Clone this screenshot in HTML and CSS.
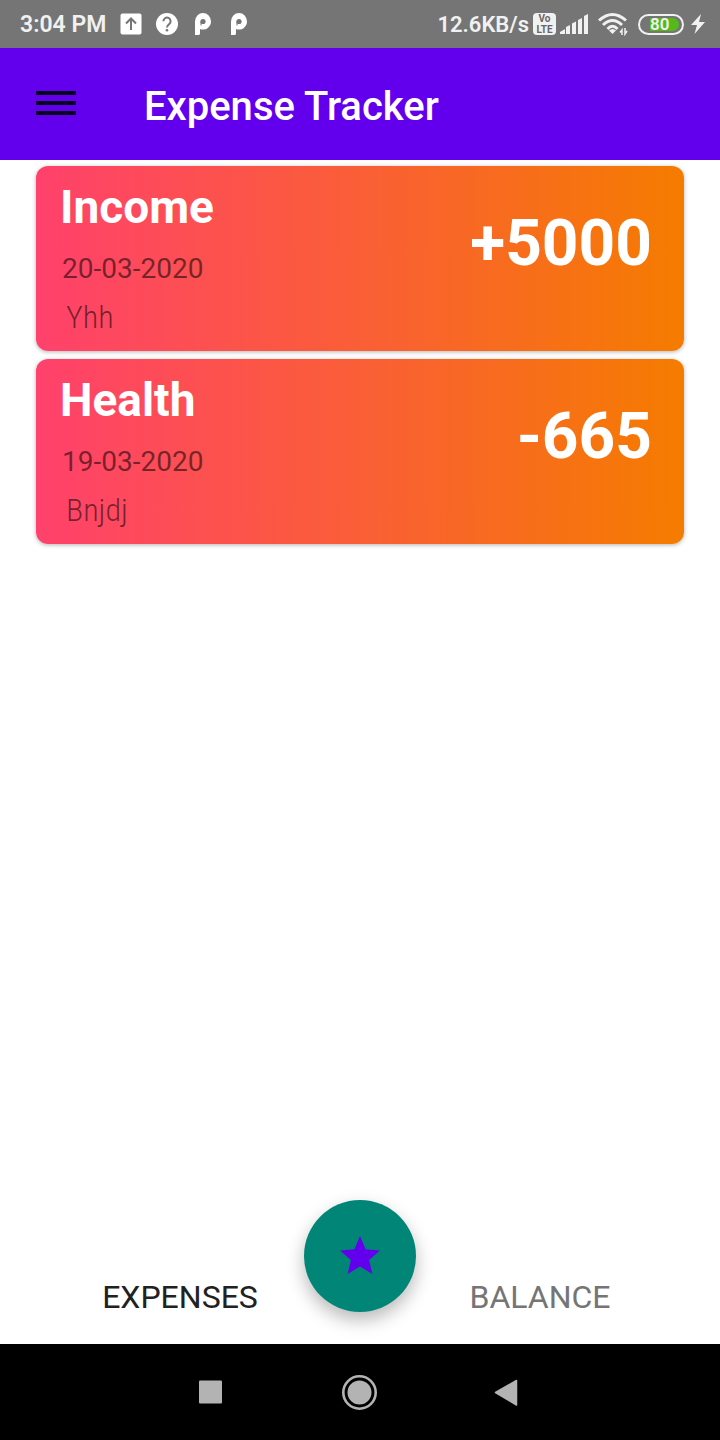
FILE: index.html
```html
<!DOCTYPE html>
<html lang="en">
<head>
<meta charset="utf-8">
<meta name="viewport" content="width=device-width, initial-scale=1">
<title>Expense Tracker</title>
<link rel="stylesheet" href="styles.css">
</head>
<body>
<div class="status-bar">
  <div class="status-left">
    <span>3:04 PM</span>
    <svg width="22" height="22" viewBox="0 0 22 22" aria-hidden="true"><rect x="0.5" y="0.5" width="21" height="21" rx="2" fill="#fff"/><path d="M11 17V6M6 10.5l5-5 5 5" fill="none" stroke="#757575" stroke-width="2"/></svg>
    <svg width="22" height="22" viewBox="0 0 22 22" aria-hidden="true"><circle cx="11" cy="11" r="11" fill="#fff"/><path d="M7.4 8.3a3.6 3.6 0 1 1 5.9 2.7c-1.500 1.200-2.300 1.700-2.300 3.500" fill="none" stroke="#757575" stroke-width="2"/><circle cx="11" cy="17.300" r="1.300" fill="#757575"/></svg>
    <svg width="22" height="22" viewBox="0 0 22 22" aria-hidden="true"><path d="M3 22V8.500A8 8.500 0 0 1 19 8.500A8 8 0 0 1 8 16V20.500Q8 22 6.500 22Z" fill="#fff"/><circle cx="11" cy="8.500" r="2.600" fill="#757575"/><path d="M9 8.500v4" stroke="#757575"/></svg>
    <svg width="22" height="22" viewBox="0 0 22 22" aria-hidden="true"><path d="M3 22V8.500A8 8.500 0 0 1 19 8.500A8 8 0 0 1 8 16V20.500Q8 22 6.500 22Z" fill="#fff"/><circle cx="11" cy="8.500" r="2.600" fill="#757575"/><path d="M9 8.500v4" stroke="#757575"/></svg>
  </div>
  <div class="status-right">
    <span>12.6KB/s</span>
    <span class="volte"><span>Vo</span><span>LTE</span></span>
    <svg width="28" height="20" viewBox="0 0 28 20" aria-hidden="true"><path d="M0 20v-2l5-3V20zM6 20v-7l4-2V20zM12 20v-10.500l4-2V20zM18 20V6l4-2v16zM24 20V2l4-2v20z" fill="#f1f1f1"/></svg>
    <svg class="wifi" width="30" height="24" viewBox="0 0 30 24" aria-hidden="true"><g fill="none" stroke="#f1f1f1" stroke-width="3"><path d="M1 8.500Q14.500-3.500 28 8.500M5 13Q14.500 4 24 13M9.500 17Q14.500 11.500 19.500 17"/></g><path d="M11 18.500Q14.500 15.500 18 18.500L14.500 22Z" fill="#f1f1f1"/><path d="M24 23v-5l-2 2.500M27 16v6l2-3" fill="none" stroke="#f1f1f1" stroke-width="1.500"/></svg>
    <span class="battery"><span class="level">80</span></span>
    <svg class="bolt" width="14" height="20" viewBox="0 0 14 20" aria-hidden="true"><path d="M10 0L0 11h6L3.500 20L14 8H8z" fill="#f1f1f1"/></svg>
  </div>
</div>

<header class="app-bar">
  <button class="menu-button" type="button" aria-label="Open menu">
    <svg width="40" height="24" viewBox="0 0 40 24" aria-hidden="true"><path d="M0 2h40M0 12h40M0 22h40" stroke="#0a0020" stroke-width="4"/></svg>
  </button>
  <h1 class="app-title">Expense Tracker</h1>
</header>

<main class="entries">
  <article class="card">
    <div>
      <h2 class="category">Income</h2>
      <p class="date">20-03-2020</p>
      <p class="note">Yhh</p>
    </div>
    <p class="amount">+5000</p>
  </article>
  <article class="card">
    <div>
      <h2 class="category">Health</h2>
      <p class="date">19-03-2020</p>
      <p class="note">Bnjdj</p>
    </div>
    <p class="amount">-665</p>
  </article>
</main>

<nav class="tabs" aria-label="Sections">
  <button class="tab active" type="button">EXPENSES</button>
  <button class="tab" type="button">BALANCE</button>
  <button class="fab" type="button" aria-label="Add entry">
    <svg width="40" height="40" viewBox="0 0 40 40" aria-hidden="true"><path d="M20 0L25.600 13.200L40 14.400L29.100 23.900L32.400 38L20 30.500L7.600 38L10.900 23.900L0 14.400L14.400 13.200Z" fill="#6200ee"/></svg>
  </button>
</nav>

<div class="system-nav">
  <button type="button" aria-label="Recent apps"><svg width="36" height="36" viewBox="0 0 36 36" aria-hidden="true"><rect x="6" y="6.500" width="23" height="23" rx="1" fill="#b3b3b3"/></svg></button>
  <button type="button" aria-label="Home"><svg width="36" height="36" viewBox="0 0 36 36" aria-hidden="true"><circle cx="18.500" cy="18.500" r="16.200" fill="none" stroke="#b3b3b3" stroke-width="2.600"/><circle cx="18.500" cy="18.500" r="12" fill="#b3b3b3"/></svg></button>
  <button type="button" aria-label="Back"><svg width="36" height="36" viewBox="0 0 36 36" aria-hidden="true"><path d="M6.500 18.500L27.500 6.500V31Z" fill="#b3b3b3" stroke="#b3b3b3" stroke-width="1.500" stroke-linejoin="round"/></svg></button>
</div>
</body>
</html>
```
FILE: styles.css
```css
* {
  box-sizing: border-box;
}

body {
  margin: 0;
  min-height: 100vh;
  display: flex;
  flex-direction: column;
  background: #fff;
  font-family: Roboto, "Liberation Sans", sans-serif;
}

h1,
h2,
p {
  margin: 0;
}

button {
  padding: 0;
  border: 0;
  background: none;
  font: inherit;
  color: inherit;
  cursor: pointer;
}

svg {
  display: block;
  flex: none;
}

.status-bar {
  display: flex;
  justify-content: space-between;
  height: 48px;
  padding: 0 15px 0 20px;
  background: #757575;
  color: #f1f1f1;
  font-size: 23px;
  font-weight: 600;
}

.status-left,
.status-right {
  display: flex;
  align-items: center;
}

.status-left {
  gap: 14px;
}

.status-right {
  gap: 4px;
  font-size: 22px;
}

.volte {
  display: flex;
  flex-direction: column;
  align-items: center;
  width: 23px;
  height: 22px;
  border-radius: 4px;
  background: #f1f1f1;
  color: #666;
  font-size: 10px;
  font-weight: 700;
  line-height: 11px;
}

.wifi {
  margin-left: 6px;
}

.battery {
  display: flex;
  width: 46px;
  height: 21px;
  margin-left: 6px;
  padding: 2px 3px 2px 10px;
  border: 2px solid #f1f1f1;
  border-radius: 11px;
}

.level {
  flex: 1;
  border-radius: 0 7px 7px 0;
  background: #55b91b;
  font-size: 17px;
  line-height: 13px;
}

.bolt {
  margin-left: 3px;
}

.app-bar {
  display: flex;
  align-items: center;
  gap: 68px;
  height: 112px;
  padding: 0 36px 2px;
  background: #6200ee;
  color: #fff;
}

.app-title {
  padding-top: 8px;
  font-size: 40px;
  font-weight: 500;
  line-height: 48px;
}

.entries {
  flex: 1;
  display: flex;
  flex-direction: column;
  gap: 8px;
  padding: 6px 36px;
}

.card {
  display: flex;
  justify-content: space-between;
  padding: 13px 32px 14px 24px;
  border-radius: 12px;
  background: linear-gradient(90deg, #ff416c, #f57c00);
  box-shadow: 0 1px 4px rgba(0, 0, 0, 0.3);
}

.category {
  color: #fff;
  font-size: 46px;
  font-weight: 700;
  line-height: 56px;
}

.date {
  padding: 18px 2px 0;
  color: rgba(0, 0, 0, 0.54);
  font-size: 28px;
  line-height: 32px;
}

.note {
  padding: 12px 6px 0;
  color: rgba(0, 0, 0, 0.54);
  font-family: "Roboto Condensed", Roboto, sans-serif;
  font-size: 32px;
  font-weight: 300;
  line-height: 40px;
}

.amount {
  padding-top: 25px;
  color: #fff;
  font-size: 64px;
  font-weight: 700;
  line-height: 80px;
}

.tabs {
  position: relative;
  display: grid;
  grid-template-columns: 1fr 1fr;
  height: 96px;
}

.tab {
  padding-top: 2px;
  color: #757575;
  font-size: 32px;
}

.tab.active {
  color: #212121;
}

.fab {
  position: absolute;
  top: -48px;
  left: 50%;
  display: grid;
  place-items: center;
  width: 112px;
  height: 112px;
  margin-left: -56px;
  border-radius: 50%;
  background: #018577;
  box-shadow: 0 8px 18px rgba(0, 0, 0, 0.28);
}

.system-nav {
  display: flex;
  align-items: center;
  justify-content: center;
  gap: 112px;
  height: 96px;
  padding-right: 2px;
  background: #000;
}
```
